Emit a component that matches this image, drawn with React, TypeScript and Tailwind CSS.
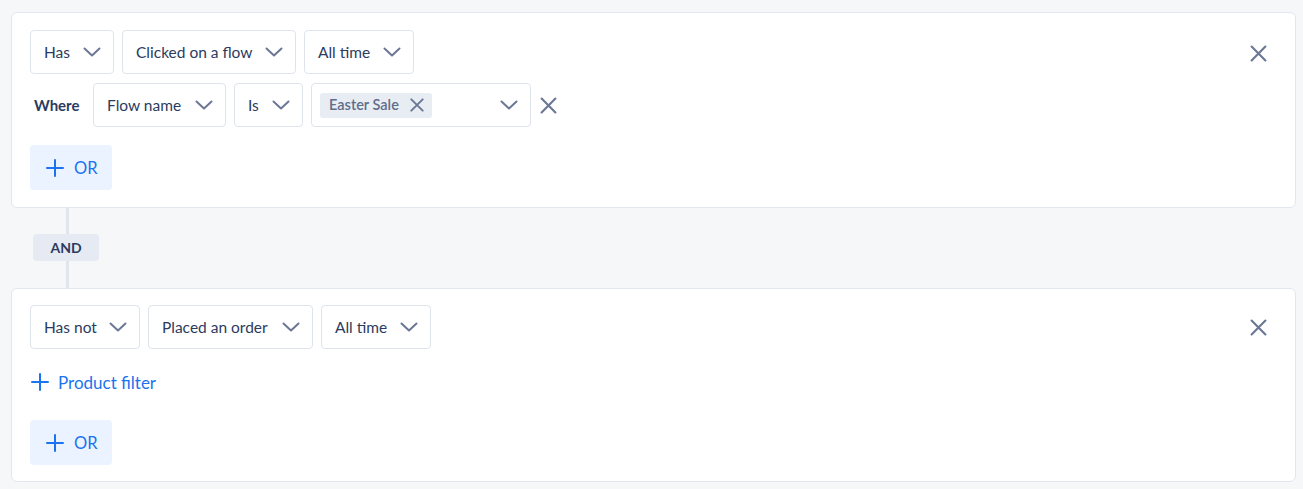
import React from "react";

const Chevron = () => (
  <svg width="18" height="10" viewBox="0 0 18 10" fill="none" className="shrink-0">
    <path d="M1.5 1.5 L9 8.5 L16.5 1.5" stroke="#6b7794" strokeWidth="2" strokeLinecap="round" strokeLinejoin="round" />
  </svg>
);

const XIcon = ({ size = 16, color = "#6b7794", sw = 2 }: { size?: number; color?: string; sw?: number }) => (
  <svg width={size} height={size} viewBox="0 0 16 16" fill="none" className="shrink-0">
    <path d="M1.5 1.5 L14.5 14.5 M14.5 1.5 L1.5 14.5" stroke={color} strokeWidth={sw} strokeLinecap="round" />
  </svg>
);

const Plus = ({ size = 18 }: { size?: number }) => (
  <svg width={size} height={size} viewBox="0 0 18 18" fill="none" className="shrink-0">
    <path d="M9 1 V17 M1 9 H17" stroke="#1a73f0" strokeWidth="2" strokeLinecap="round" />
  </svg>
);

const Select = ({ label, w }: { label: string; w: string }) => (
  <div className={`flex h-[44px] items-center justify-between rounded-[4px] border border-[#dfe3ec] bg-white pl-[13px] pr-[12px] ${w}`}>
    <span className="pt-px text-[15.5px] text-[#2b3b5e]">{label}</span>
    <Chevron />
  </div>
);

const OrButton = () => (
  <div className="flex h-[45px] w-[82px] items-center gap-[10px] rounded-[4px] bg-[#eaf3ff] pl-[16px]">
    <Plus />
    <span className="pt-px text-[16.5px] text-[#1a73f0]">OR</span>
  </div>
);

export default function App() {
  return (
    <div
      className="min-h-[489px] bg-[#f6f7f9] pl-[11px] pt-[12px]"
      style={{ fontFamily: "Lato, 'Noto Sans', sans-serif" }}
    >
      <div className="w-[1285px]">
        {/* Card 1 */}
        <div className="flex rounded-[6px] border border-[#e2e6ee] bg-white pb-[17px] pl-[18px] pr-[28px] pt-[17px]">
          <div className="flex flex-1 flex-col">
            <div className="flex gap-[8px]">
              <Select label="Has" w="w-[84px]" />
              <Select label="Clicked on a flow" w="w-[174px]" />
              <Select label="All time" w="w-[110px]" />
            </div>
            <div className="mt-[9px] flex items-center">
              <span className="ml-[4px] w-[59px] text-[15px] font-bold text-[#2b3b5e]">Where</span>
              <div className="flex gap-[8px]">
                <Select label="Flow name" w="w-[133px]" />
                <Select label="Is" w="w-[69px]" />
                <div className="flex h-[44px] w-[220px] items-center justify-between rounded-[4px] border border-[#dfe3ec] bg-white pl-[8px] pr-[12px]">
                  <div className="flex h-[25px] w-[112px] items-center justify-between rounded-[3px] bg-[#e8ecf3] pl-[9px] pr-[8px]">
                    <span className="text-[14.5px] font-semibold text-[#5f6d8b]">Easter Sale</span>
                    <XIcon size={14} sw={2.2} />
                  </div>
                  <Chevron />
                </div>
              </div>
              <div className="ml-[9px]">
                <XIcon size={17} sw={2} />
              </div>
            </div>
            <div className="mt-[18px]">
              <OrButton />
            </div>
          </div>
          <div className="pt-[15px]">
            <XIcon size={17} sw={2} />
          </div>
        </div>

        {/* Connector */}
        <div className="relative h-[80px]">
          <div className="absolute left-[55px] top-0 h-full w-[3px] bg-[#e1e5ee]" />
          <div className="absolute left-[22px] top-[26px] flex h-[27px] w-[66px] items-center justify-center rounded-[4px] bg-[#e6eaf2]">
            <span className="text-[14px] font-bold text-[#2b3b5e]">AND</span>
          </div>
        </div>

        {/* Card 2 */}
        <div className="flex rounded-[6px] border border-[#e2e6ee] bg-white pb-[16px] pl-[18px] pr-[28px] pt-[16px]">
          <div className="flex flex-1 flex-col">
            <div className="flex gap-[8px]">
              <Select label="Has not" w="w-[110px]" />
              <Select label="Placed an order" w="w-[165px]" />
              <Select label="All time" w="w-[110px]" />
            </div>
            <div className="mt-[21px] flex h-[24px] items-center gap-[9px] pl-[1px]">
              <Plus />
              <span className="pt-px text-[17px] text-[#1a73f0]">Product filter</span>
            </div>
            <div className="mt-[26px]">
              <OrButton />
            </div>
          </div>
          <div className="pt-[14px]">
            <XIcon size={17} sw={2} />
          </div>
        </div>
      </div>
    </div>
  );
}
